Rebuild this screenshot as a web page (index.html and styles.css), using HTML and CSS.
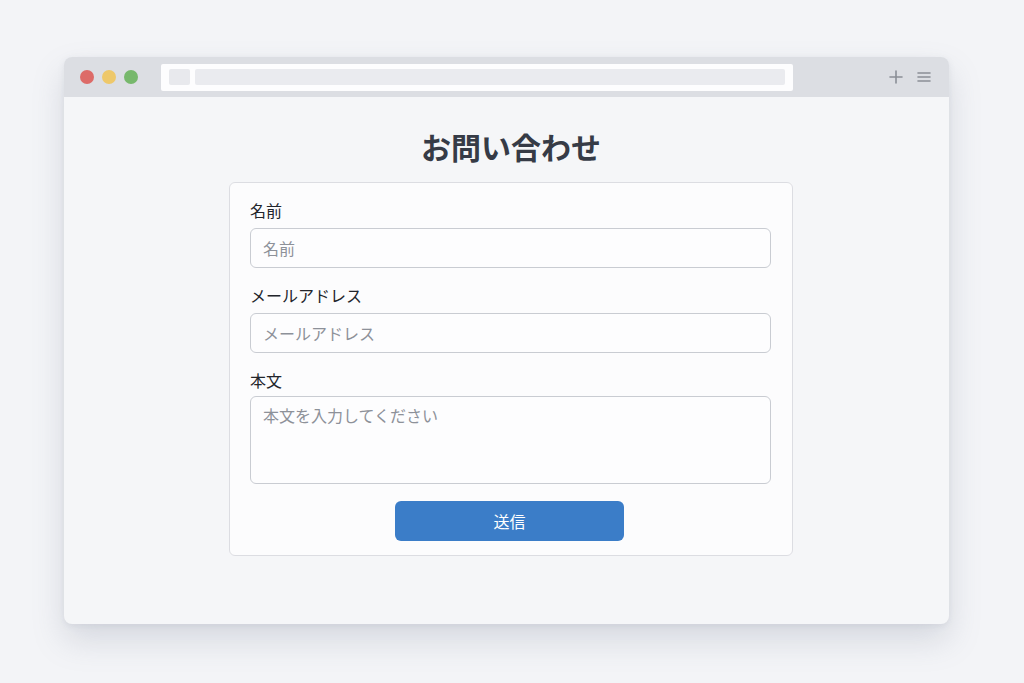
FILE: index.html
```html
<!DOCTYPE html>
<html lang="ja">
<head>
<meta charset="utf-8">
<link rel="stylesheet" href="styles.css">
</head>
<body>
<div class="window">
  <div class="titlebar">
    <div class="dots">
      <span class="dot red"></span>
      <span class="dot yellow"></span>
      <span class="dot green"></span>
    </div>
    <div class="address">
      <span class="favicon"></span>
      <span class="url"></span>
    </div>
    <div class="tools">
      <svg class="icon" width="16" height="16" viewBox="0 0 16 16"><path d="M8 2v12M2 8h12" stroke="#8a8e96" stroke-width="1.6" fill="none" stroke-linecap="round"/></svg>
      <svg class="icon" width="16" height="16" viewBox="0 0 16 16"><path d="M2 4h12M2 8h12M2 12h12" stroke="#8a8e96" stroke-width="1.6" fill="none" stroke-linecap="round"/></svg>
    </div>
  </div>
  <div class="content">
    <div class="column">
      <h1 class="title">お問い合わせ</h1>
      <form class="card">
        <label class="label">名前</label>
        <input class="field" type="text" placeholder="名前">
        <label class="label">メールアドレス</label>
        <input class="field" type="text" placeholder="メールアドレス">
        <label class="label tight">本文</label>
        <textarea class="field area" placeholder="本文を入力してください"></textarea>
        <div class="actions"><button class="submit" type="button">送信</button></div>
      </form>
    </div>
  </div>
</div>
</body>
</html>
```

FILE: styles.css
```css
* { box-sizing: border-box; }
html, body { margin: 0; padding: 0; }
body {
  background: #f3f4f7;
  font-family: "Noto Sans CJK JP", "Noto Sans", sans-serif;
  width: 1024px;
  height: 683px;
  overflow: hidden;
  padding-top: 57px;
  padding-left: 64px;
}
.window {
  width: 885px;
  height: 567px;
  border-radius: 8px;
  background: #f5f6f8;
  box-shadow: 0 16px 32px rgba(120, 128, 150, 0.24), 0 2px 6px rgba(120, 128, 150, 0.12);
  overflow: hidden;
  display: flex;
  flex-direction: column;
}
.titlebar {
  height: 40px;
  background: #dcdee3;
  display: flex;
  align-items: center;
  padding: 0 0 0 16px;
}
.dots { display: flex; gap: 8px; }
.dot { width: 14px; height: 14px; border-radius: 50%; display: block; }
.red { background: #dd6b68; }
.yellow { background: #eec86a; }
.green { background: #77b86c; }
.address {
  margin-left: 23px;
  width: 632px;
  height: 27px;
  background: #fdfdfe;
  border-radius: 2px;
  display: flex;
  align-items: center;
  padding: 0 8px;
  gap: 5px;
}
.favicon { width: 21px; height: 16px; background: #e8e9ed; border-radius: 2px; display: block; }
.url { flex: 1; height: 16px; background: #eaebef; border-radius: 2px; display: block; }
.tools { margin-left: 95px; display: flex; gap: 12px; align-items: center; }
.icon { display: block; }
.content { flex: 1; }
.column { width: 564px; margin-left: 165px; }
.title {
  margin: 0;
  padding-top: 29px;
  height: 85px;
  line-height: 40px;
  text-align: center;
  font-size: 30px;
  font-weight: 700;
  color: #363b46;
}
.card {
  background: #fcfcfd;
  border: 1px solid #dcdde2;
  border-radius: 6px;
  padding: 17px 21px 14px 20px;
  display: flex;
  flex-direction: column;
}
.label {
  font-size: 16px;
  line-height: 20px;
  color: #22252b;
  margin-bottom: 8px;
}
.label.tight { margin-bottom: 6px; }
.field {
  height: 40px;
  border: 1px solid #c9ccd2;
  border-radius: 6px;
  background: #fdfdfe;
  padding: 0 12px;
  font-family: inherit;
  font-size: 16px;
  color: #22252b;
  margin: 0 0 17px 0;
  outline: none;
}
.field::placeholder { color: #8d9199; }
.area {
  height: 88px;
  resize: none;
  padding-top: 8px;
  line-height: 20px;
}
.actions { display: flex; justify-content: center; }
.submit {
  width: 229px;
  height: 40px;
  margin-right: 2px;
  background: #3b7dc8;
  border: none;
  border-radius: 6px;
  color: #ffffff;
  font-family: inherit;
  font-size: 16px;
}
```
